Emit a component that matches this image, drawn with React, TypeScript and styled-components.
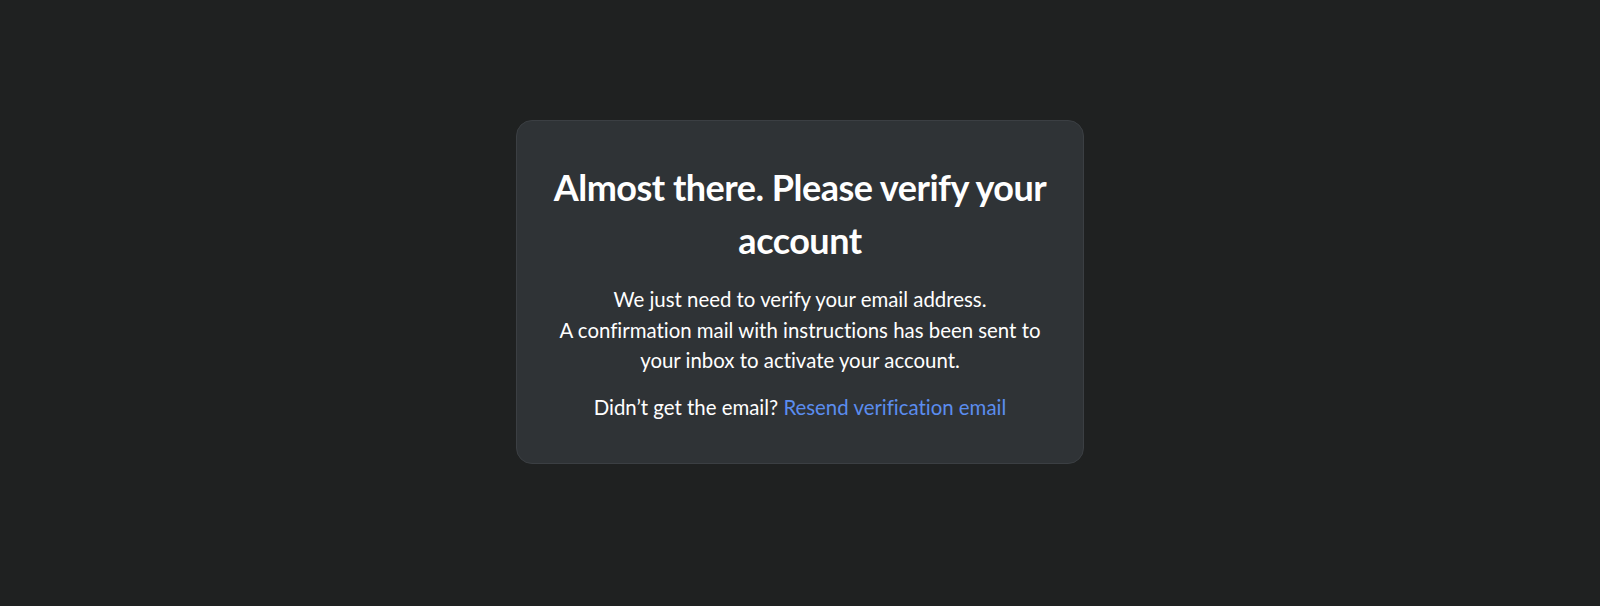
import { createGlobalStyle } from "styled-components";
import styled from "styled-components";

const GlobalStyle = createGlobalStyle`
  * {
    box-sizing: border-box;
  }

  html,
  body {
    margin: 0;
    padding: 0;
    background-color: #1f2121;
  }

  body {
    font-family: "Lato", "Noto Sans", sans-serif;
    color: #ffffff;
  }
`;

const VerifyContainer = styled.div`
  display: flex;
  justify-content: center;
  align-items: flex-start;
  min-height: 100vh;
  padding-top: 120px;
`;

const Card = styled.div`
  width: 568px;
  background-color: #2f3336;
  border: 1px solid #3b3f43;
  border-radius: 16px;
  padding: 40px 32px 41px;
  display: flex;
  flex-direction: column;
  align-items: center;
  text-align: center;
`;

const Title = styled.h1`
  font-family: "Lato", sans-serif;
  font-size: 36px;
  font-weight: 700;
  line-height: 53px;
  letter-spacing: -0.5px;
  color: #ffffff;
  margin: 0 0 17px;
`;

const Text = styled.p`
  font-family: "Lato", "Noto Sans", sans-serif;
  font-size: 20.4px;
  line-height: 30.5px;
  font-variant-ligatures: none;
  color: #ffffff;
  margin: 0 0 16px;

  &:last-child {
    margin-bottom: 0;
  }
`;

const ResendLink = styled.a`
  color: #5b8def;
  text-decoration: none;
  cursor: pointer;

  &:hover {
    text-decoration: underline;
  }
`;

const App: React.FC = () => {
  return (
    <>
      <GlobalStyle />
      <VerifyContainer>
        <Card>
          <Title>Almost there. Please verify your account</Title>
          <Text>
            We just need to verify your email address.
            <br />
            A confirmation mail with instructions has been sent to your inbox
            to activate your account.
          </Text>
          <Text>
            Didn’t get the email?{" "}
            <ResendLink href="#">Resend verification email</ResendLink>
          </Text>
        </Card>
      </VerifyContainer>
    </>
  );
};

export default App;
